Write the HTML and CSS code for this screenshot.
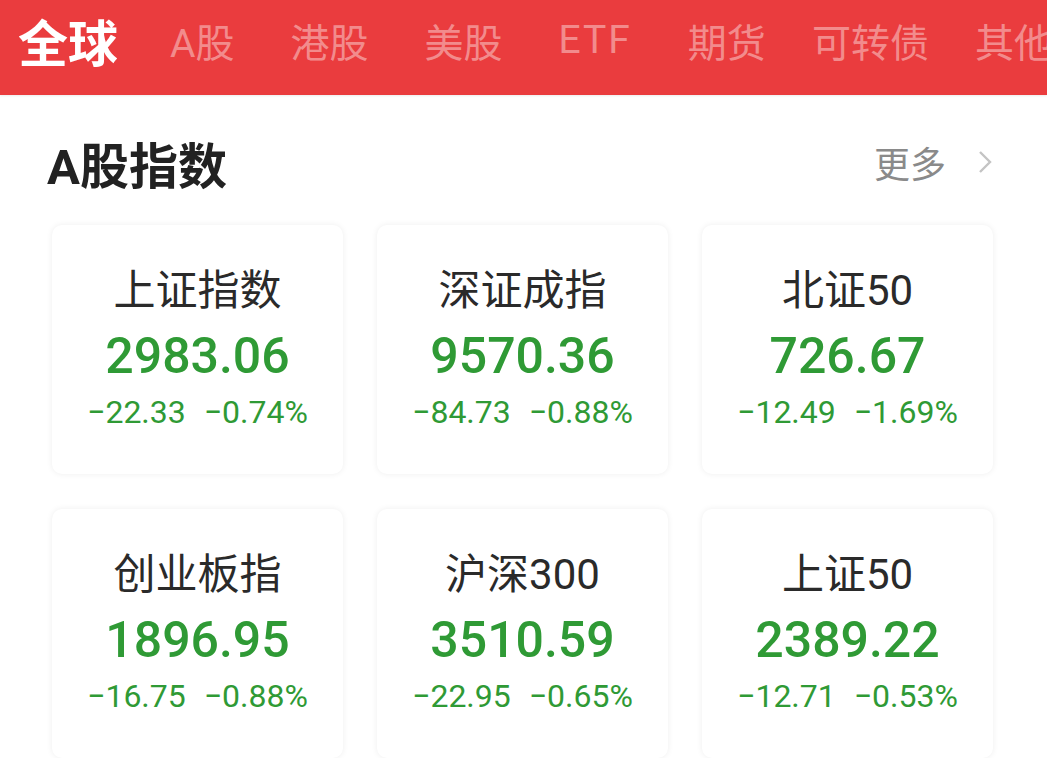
FILE: index.html
```html
<!DOCTYPE html>
<html lang="zh-CN">

<head>
    <meta charset="UTF-8">
    <meta name="viewport" content="width=device-width, initial-scale=1.0">
    <title>行情</title>
    <link rel="stylesheet" href="styles.css">
</head>

<body>
    <div class="tabs">
        <div class="tab active">全球</div>
        <div class="tab">A股</div>
        <div class="tab">港股</div>
        <div class="tab">美股</div>
        <div class="tab latin">ETF</div>
        <div class="tab">期货</div>
        <div class="tab tight">可转债</div>
        <div class="tab tight">其他</div>
    </div>

    <div class="section">
        <div class="section-head">
            <h2>A股指数</h2>
            <div class="more">更多
                <svg width="14" height="24" viewBox="0 0 14 24">
                    <path d="M2 2 L12 12 L2 22" fill="none" stroke="#c4c4c4" stroke-width="2.4" />
                </svg>
            </div>
        </div>

        <div class="grid">
            <div class="card">
                <div class="name">上证指数</div>
                <div class="value">2983.06</div>
                <div class="change"><span>−22.33</span><span>−0.74%</span></div>
            </div>
            <div class="card">
                <div class="name">深证成指</div>
                <div class="value">9570.36</div>
                <div class="change"><span>−84.73</span><span>−0.88%</span></div>
            </div>
            <div class="card">
                <div class="name">北证50</div>
                <div class="value">726.67</div>
                <div class="change"><span>−12.49</span><span>−1.69%</span></div>
            </div>
            <div class="card">
                <div class="name">创业板指</div>
                <div class="value">1896.95</div>
                <div class="change"><span>−16.75</span><span>−0.88%</span></div>
            </div>
            <div class="card">
                <div class="name">沪深300</div>
                <div class="value">3510.59</div>
                <div class="change"><span>−22.95</span><span>−0.65%</span></div>
            </div>
            <div class="card">
                <div class="name">上证50</div>
                <div class="value">2389.22</div>
                <div class="change"><span>−12.71</span><span>−0.53%</span></div>
            </div>
        </div>
    </div>
</body>

</html>
```

FILE: styles.css
```css
* {
    margin: 0;
    padding: 0;
    box-sizing: border-box;
}

body {
    font-family: Roboto, "Noto Sans CJK SC", sans-serif;
    background: #fff;
    width: 1047px;
    overflow: hidden;
}

.tabs {
    height: 95px;
    background-color: #ea3c3e;
    display: flex;
    align-items: center;
    gap: 56px;
    padding: 0 0 16px 18px;
    white-space: nowrap;
    overflow: hidden;
    box-shadow: 0 1px 2px rgba(0, 0, 0, 0.08);
}

.tab {
    font-size: 39px;
    color: rgba(255, 255, 255, 0.42);
    flex-shrink: 0;
}

.tab.latin {
    letter-spacing: 2px;
}

.tab.tight {
    margin-left: -10px;
}

.tab.active {
    font-size: 50px;
    font-weight: 700;
    color: #fff;
    margin-right: -4px;
}

.section {
    padding: 0 52px 0 47px;
}

.section-head {
    display: flex;
    justify-content: space-between;
    align-items: center;
    height: 130px;
    padding-top: 4px;
}

h2 {
    font-size: 49px;
    font-weight: 700;
    color: #222;
}

.more {
    display: flex;
    align-items: center;
    gap: 32px;
    font-size: 36px;
    color: #8a8a8a;
    margin-right: 3px;
}

.grid {
    display: grid;
    grid-template-columns: repeat(3, 291px);
    column-gap: 34px;
    row-gap: 35px;
    padding-left: 5px;
}

.card {
    height: 249px;
    background: #fff;
    border-radius: 10px;
    box-shadow: 0 0 6px rgba(0, 0, 0, 0.07);
    display: flex;
    flex-direction: column;
    align-items: center;
    padding-top: 39px;
}

.name {
    font-size: 42px;
    color: #2a2a2a;
    line-height: 54px;
}

.value {
    font-size: 50px;
    font-weight: 500;
    color: #2f9a35;
    line-height: 72px;
    margin-top: 2px;
}

.change {
    font-size: 32px;
    color: #2f9a35;
    display: flex;
    gap: 18px;
    line-height: 44px;
    margin-top: -2px;
}
```
